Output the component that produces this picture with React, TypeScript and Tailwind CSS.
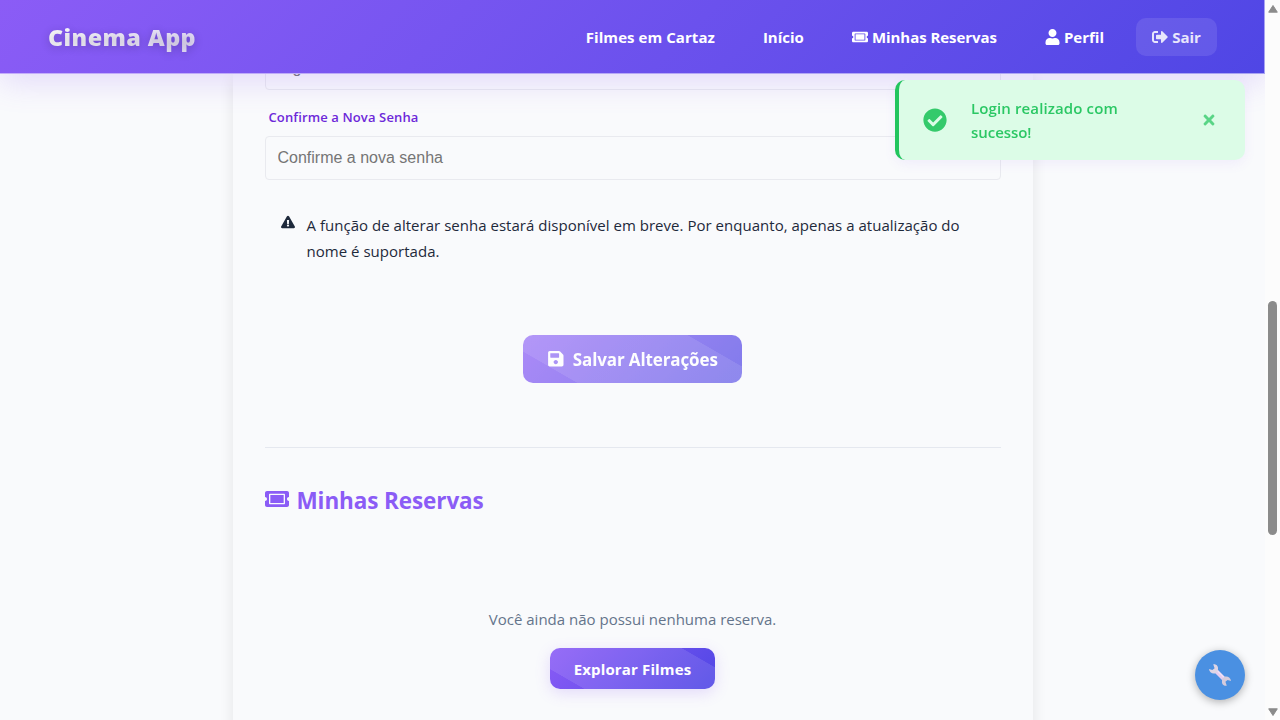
import type { ReactNode } from 'react';
import {
  FaCheckCircle,
  FaExclamationTriangle,
  FaSave,
  FaSignOutAlt,
  FaTicketAlt,
  FaTimes,
  FaUser,
} from 'react-icons/fa';

function NavLink({ children }: { children: ReactNode }) {
  return (
    <a className="flex items-center gap-1 whitespace-nowrap text-[15px] font-bold leading-6 text-white">
      {children}
    </a>
  );
}

function Header() {
  return (
    <header className="relative z-10 flex h-[74px] shrink-0 items-center border-r border-b border-white/50 bg-linear-135 from-[#8b5cf6] to-[#4f46e5] pr-[47px] pl-12 shadow-[0_8px_32px_rgba(139,92,246,0.2)] [background-origin:border-box]">
      <div className="bg-linear-135 from-white to-white/80 bg-clip-text pt-px text-[23.4px] font-extrabold leading-8 tracking-[0.4px] text-transparent [text-shadow:0_2px_10px_rgba(0,0,0,0.2)]">
        Cinema App
      </div>
      <nav className="ml-auto flex items-center gap-12">
        <NavLink>
          <span className="tracking-[0.06px]">Filmes em Cartaz</span>
        </NavLink>
        <NavLink>Início</NavLink>
        <NavLink>
          <FaTicketAlt className="size-4" />
          <span className="tracking-[-0.05px]">Minhas Reservas</span>
        </NavLink>
        <NavLink>
          <FaUser className="h-4 w-[15px]" />
          Perfil
        </NavLink>
      </nav>
      <button className="ml-8 flex h-[38px] w-[81px] items-center justify-center gap-1 rounded-[10px] bg-white/10 text-[15px] font-bold text-white/85">
        <FaSignOutAlt className="size-4" />
        <span className="pt-[2px]">Sair</span>
      </button>
    </header>
  );
}

function Toast() {
  return (
    <div className="absolute top-20 left-[895px] z-20 flex h-20 w-[350px] items-center rounded-[10px] border-l-4 border-[#22c55e] bg-[#dcfce7] pl-6 text-[#22c55e] shadow-[0_4px_12px_rgba(139,92,246,0.08)]">
      <FaCheckCircle className="size-6 shrink-0 opacity-90" />
      <p className="ml-6 w-[200px] text-[15px] font-semibold leading-6 tracking-[0.12px] opacity-95">
        Login realizado com
        <br />
        <span className="tracking-[-0.05px]">sucesso!</span>
      </p>
      <FaTimes className="ml-[30px] size-4 opacity-70" />
    </div>
  );
}

function Field({ placeholder }: { placeholder: string }) {
  return (
    <input
      type="password"
      placeholder={placeholder}
      className="block h-11 w-full rounded-[4px] border border-[#e9eaef] bg-[#f9fafc] px-3 font-['Liberation_Sans',Arial,sans-serif] text-base placeholder:text-[#757575]"
    />
  );
}

function Wrench() {
  return (
    <svg viewBox="0 0 24 24" className="size-6">
      <path d="M8 8L17 17" stroke="#e5cdf0" strokeWidth="4.2" />
      <path d="M9 7.4L17 15.4" stroke="#f2e4f7" strokeWidth="1.3" />
      <path
        d="M5.2 1.2C8.3.7 10.5 3 10 6L9.7 8.6L7.4 10.2C4.2 11.1 1.2 9 1 5.9L4.4 7.1L6.6 5.2Z"
        fill="#ded5e5"
      />
      <path
        d="M18.8 22.8C15.7 23.3 13.5 21 14 18L14.3 15.4L16.6 13.8C19.8 12.9 22.8 15 23 18.1L19.6 16.9L17.4 18.8Z"
        fill="#d5cbdc"
      />
    </svg>
  );
}

function Scrollbar() {
  return (
    <div className="flex h-full w-[15px] flex-col items-center bg-[#fcfcfc]">
      <svg viewBox="0 0 10 8" className="mt-[5px] h-2 w-[10px] shrink-0">
        <path d="M5 .5L9.3 7.2H.7Z" fill="#8b8b8b" stroke="#8b8b8b" strokeLinejoin="round" />
      </svg>
      <div className="mt-[288px] h-[234px] w-[9px] shrink-0 rounded-full bg-[#8b8b8b]" />
      <svg viewBox="0 0 10 8" className="mt-auto mb-[4px] h-2 w-[10px] shrink-0">
        <path d="M5 7.5L9.3.8H.7Z" fill="#8b8b8b" stroke="#8b8b8b" strokeLinejoin="round" />
      </svg>
    </div>
  );
}

export default function App() {
  return (
    <div className="relative flex h-[720px] w-[1280px] overflow-hidden bg-[#f9fafc] font-['Open_Sans','Noto_Sans',sans-serif]">
      <div className="flex h-full w-[1265px] flex-col overflow-hidden">
        <Header />
        <main className="min-h-0 flex-1">
          <div className="ml-[232.5px] h-[680px] w-[800px] bg-[#f9fafc] px-8 shadow-[0_4px_14px_rgba(0,0,0,0.09)]">
            <div className="-translate-y-7">
              <Field placeholder="Digite a nova senha" />
              <label className="mt-[15px] mb-[7px] block pl-1 text-[13px] font-semibold leading-6 tracking-[0.13px] text-[#6d28d9]">
                Confirme a Nova Senha
              </label>
              <Field placeholder="Confirme a nova senha" />

              <div className="mt-8 flex pl-4 text-[#1e293b]">
                <FaExclamationTriangle className="mt-[3px] size-[14px] shrink-0" />
                <p className="ml-3 whitespace-nowrap text-[15px] leading-[26px] tracking-[0.025px]">
                  A função de alterar senha estará disponível em breve. Por enquanto, apenas a atualização do
                  <br />
                  nome é suportada.
                </p>
              </div>

              <div className="mt-[71px] flex justify-center">
                <button className="flex h-12 w-[219px] items-center justify-center gap-2 rounded-[10px] bg-[linear-gradient(30deg,transparent_27px,rgba(255,255,255,0.1)_27.5px,rgba(255,255,255,0.1)_123.5px,transparent_124px),linear-gradient(135deg,#8b5cf6,#4f46e5)] text-[17px] font-bold tracking-[-0.12px] text-white opacity-70">
                  <FaSave className="size-[17.6px]" />
                  <span className="pt-[2px]">Salvar Alterações</span>
                </button>
              </div>

              <div className="mt-16 border-t border-[#e5e8ef] pt-[35px]">
                <h2 className="flex items-center gap-2 text-[22.5px] font-bold leading-9 tracking-[-0.1px] text-[#8b5cf6]">
                  <FaTicketAlt className="-mt-1 size-6" />
                  Minhas Reservas
                </h2>
              </div>

              <div className="mt-[88px] flex flex-col items-center">
                <p className="text-[15px] leading-6 text-[#64748b]">Você ainda não possui nenhuma reserva.</p>
                <button className="mt-[17px] h-[41px] w-[165.5px] rounded-[10px] bg-[linear-gradient(30deg,transparent_17px,rgba(255,255,255,0.1)_17.5px,rgba(255,255,255,0.1)_101px,transparent_101.5px),linear-gradient(135deg,#8b5cf6,#4f46e5)] pt-[2px] text-[15px] font-bold tracking-[0.15px] text-white shadow-[0_4px_15px_rgba(139,92,246,0.2)]">
                  Explorar Filmes
                </button>
              </div>
            </div>
          </div>
        </main>
      </div>
      <Scrollbar />
      <Toast />
      <button className="absolute top-[650px] left-[1195px] z-20 flex size-[50px] items-center justify-center rounded-full bg-[#4a90e2] shadow-[0_2px_8px_rgba(0,0,0,0.3)]">
        <Wrench />
      </button>
    </div>
  );
}
